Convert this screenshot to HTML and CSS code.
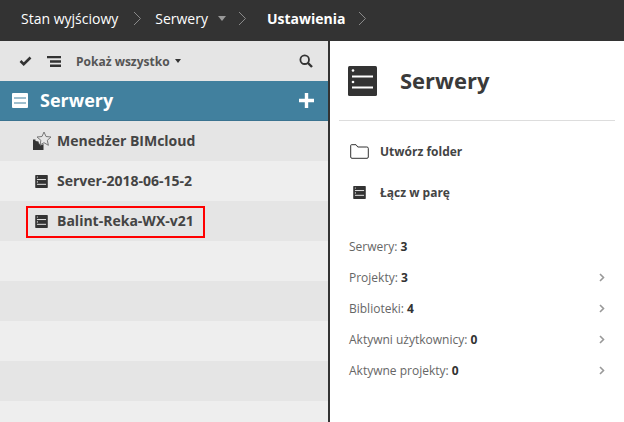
FILE: index.html
```html
<!DOCTYPE html>
<html lang="pl">
<head>
<meta charset="utf-8">
<title>Serwery</title>
<link rel="stylesheet" href="styles.css">
</head>
<body>
<svg class="defs" width="0" height="0">
  <symbol id="srv" viewBox="0 0 29 30">
    <rect width="29" height="30" rx="1.500" fill="#333"/>
    <path d="M4 10.500h21M4 21.500h21" stroke="#fff" stroke-width="2"/>
    <circle cx="5" cy="4.500" r="1.300" fill="#fff"/><circle cx="5" cy="16" r="1.300" fill="#fff"/>
  </symbol>
</svg>
<header class="crumbs">
  <span class="crumb">Stan wyjściowy</span>
  <svg class="sep" width="9" height="15" viewBox="0 0 9 15"><path d="M1 1l6.500 6.500L1 14" fill="none" stroke="#8a8a8a" stroke-width="1"/></svg>
  <span class="crumb">Serwery</span>
  <span class="caret"></span>
  <svg class="sep sep-b" width="9" height="15" viewBox="0 0 9 15"><path d="M1 1l6.500 6.500L1 14" fill="none" stroke="#8a8a8a" stroke-width="1"/></svg>
  <span class="crumb current">Ustawienia</span>
  <svg class="sep sep-c" width="9" height="15" viewBox="0 0 9 15"><path d="M1 1l6.500 6.500L1 14" fill="none" stroke="#8a8a8a" stroke-width="1"/></svg>
</header>
<main class="panes">
  <section class="left">
    <div class="toolbar">
      <svg class="ic-check" width="13" height="10" viewBox="0 0 13 10"><path d="M1.500 5l3.200 3.200L11.500 1.500" fill="none" stroke="#333" stroke-width="2.600"/></svg>
      <svg class="ic-stack" width="14" height="11" viewBox="0 0 14 11"><path d="M0 1h14M3 5.500h11M3 9.800h11" stroke="#333" stroke-width="2.400" fill="none"/></svg>
      <span class="filter">Pokaż wszystko</span>
      <span class="caret dark"></span>
      <svg class="ic-search" width="14" height="14" viewBox="0 0 14 14"><circle cx="5.700" cy="5.700" r="4.300" fill="none" stroke="#333" stroke-width="1.800"/><path d="M9 9l4 4" stroke="#333" stroke-width="2.400"/></svg>
    </div>
    <div class="head">
      <svg class="ic-head" width="16" height="15" viewBox="0 0 16 15"><rect width="16" height="15" rx="1" fill="#fff"/><path d="M2 5h12M2 10h12" stroke="#41809e" stroke-width="1"/></svg>
      <span class="head-title">Serwery</span>
      <svg class="ic-plus" width="15" height="15" viewBox="0 0 15 15"><path d="M7.500 0v15M0 7.500h15" stroke="#fff" stroke-width="3.400"/></svg>
    </div>
    <div class="row">
      <svg class="ic-mgr" width="20" height="20" viewBox="0 0 20 20"><path d="M1 8.500h2.500v1.500l3 .5.500 2.500 1.500-.5v2l3-1.500v6H1z" fill="#333"/><path d="M12 1l2 4.500 5 .5-3.700 3.300 1.100 5L12 11.700 8 14" fill="none" stroke="#777" stroke-width="1"/><path d="M8 14l.9-4.700L5 6l5-.5L12 1" fill="none" stroke="#777" stroke-width="1"/></svg>
      <span class="row-label">Menedżer BIMcloud</span>
    </div>
    <div class="row">
      <svg class="ic-srv" width="13" height="13"><use href="#srv"/></svg>
      <span class="row-label">Server-2018-06-15-2</span>
    </div>
    <div class="row">
      <svg class="ic-srv" width="13" height="13"><use href="#srv"/></svg>
      <span class="row-label">Balint-Reka-WX-v21</span>
      <span class="mark"></span>
    </div>
    <div class="row"></div>
    <div class="row"></div>
    <div class="row"></div>
    <div class="row"></div>
    <div class="row"></div>
  </section>
  <section class="right">
    <div class="title">
      <svg class="ic-title" width="29" height="30"><use href="#srv"/></svg>
      <h1>Serwery</h1>
    </div>
    <ul class="actions">
      <li><span class="a-ic"><svg width="19" height="15" viewBox="0 0 19 15"><path d="M.7 13V1.500q0-.800.800-.800h4.500l1.800 2.300h9q1.500 0 1.500 1.300V13q0 1.300-1.300 1.300H2Q.7 14.300.7 13z" fill="none" stroke="#333" stroke-width="1"/></svg></span>Utwórz folder</li>
      <li><span class="a-ic"><svg width="13" height="13"><use href="#srv"/></svg></span>Łącz w parę</li>
    </ul>
    <ul class="stats">
      <li><span>Serwery: <b>3</b></span></li>
      <li><span>Projekty: <b>3</b></span><svg width="6" height="9" viewBox="0 0 6 9"><path d="M1 1l3.500 3.500L1 8" fill="none" stroke="#999" stroke-width="1.600"/></svg></li>
      <li><span>Biblioteki: <b>4</b></span><svg width="6" height="9" viewBox="0 0 6 9"><path d="M1 1l3.500 3.500L1 8" fill="none" stroke="#999" stroke-width="1.600"/></svg></li>
      <li><span>Aktywni użytkownicy: <b>0</b></span><svg width="6" height="9" viewBox="0 0 6 9"><path d="M1 1l3.500 3.500L1 8" fill="none" stroke="#999" stroke-width="1.600"/></svg></li>
      <li><span>Aktywne projekty: <b>0</b></span><svg width="6" height="9" viewBox="0 0 6 9"><path d="M1 1l3.500 3.500L1 8" fill="none" stroke="#999" stroke-width="1.600"/></svg></li>
    </ul>
  </section>
</main>
</body>
</html>
```
FILE: styles.css
```css
* { box-sizing: border-box; }
html, body { margin: 0; height: 100%; overflow: hidden; }
body { font-family: "Open Sans", sans-serif; color: #333; background: #fff; width: 624px; height: 422px; }
.defs { position: absolute; }
svg { display: block; flex: none; }

.crumbs { height: 41px; background: #333; display: flex; align-items: center; padding: 0 0 4px 21px; color: #fff; font-size: 14px; }
.crumb { white-space: nowrap; }
.crumb.current { font-weight: 700; margin-left: 20px; }
.sep { margin-left: 15px; margin-right: 13px; }
.sep-b { margin-left: 12px; margin-right: 0; }
.sep-c { margin-left: 12px; }
.caret { width: 0; height: 0; border-left: 4.5px solid transparent; border-right: 4.5px solid transparent; border-top: 5px solid #999; margin-left: 10px; }

.panes { display: flex; height: 381px; }
.left { width: 330px; border-right: 2px solid #333; flex: none; overflow: hidden; }
.right { flex: 1; min-width: 0; }

.toolbar { height: 40px; background: #e5e5e5; display: flex; align-items: center; padding: 0 15px 0 19px; }
.ic-stack { margin-left: 15px; }
.filter { font-size: 12px; font-weight: 700; color: #555; margin-left: 15px; }
.caret.dark { border-left-width: 3.5px; border-right-width: 3.5px; border-top: 4px solid #333; margin-left: 5px; }
.ic-search { margin-left: auto; }

.head { height: 40px; background: #41809e; border-bottom: 1px solid #3a7390; display: flex; align-items: center; padding: 0 14px 0 12px; color: #fff; }
.head-title { font-size: 18px; font-weight: 700; margin-left: 12px; position: relative; top: -1px; }
.ic-plus { margin-left: auto; }

.row { height: 40px; background: #eee; display: flex; align-items: center; position: relative; padding-left: 35px; }
.row:nth-child(odd) { background: #e5e5e5; }
.row-label { font-size: 14px; font-weight: 700; white-space: nowrap; margin-left: 9px; color: #444; position: relative; top: -1px; }
.ic-mgr { margin-left: -3px; }
.ic-mgr + .row-label { margin-left: 5px; }
.mark { position: absolute; left: 26px; top: 5px; width: 179px; height: 32px; border: 2px solid #f00; }

.title { height: 80px; margin: 0 9px; border-bottom: 1px solid #ddd; display: flex; align-items: center; padding: 0 0 0 9px; }
h1 { font-size: 22px; font-weight: 700; margin: 0 0 0 23px; color: #3a3a3a; position: relative; top: -1px; }
.actions { list-style: none; margin: 0; padding: 10px 0 0 0; }
.actions li { height: 41px; display: flex; align-items: center; font-size: 12px; font-weight: 700; color: #444; }
.a-ic { width: 50px; display: flex; justify-content: center; padding-left: 9px; }
.stats { list-style: none; margin: 0; padding: 18px 19px 0 19px; }
.stats li { height: 31px; display: flex; align-items: center; justify-content: space-between; font-size: 12px; color: #666; }
.stats b { color: #333; }
```
